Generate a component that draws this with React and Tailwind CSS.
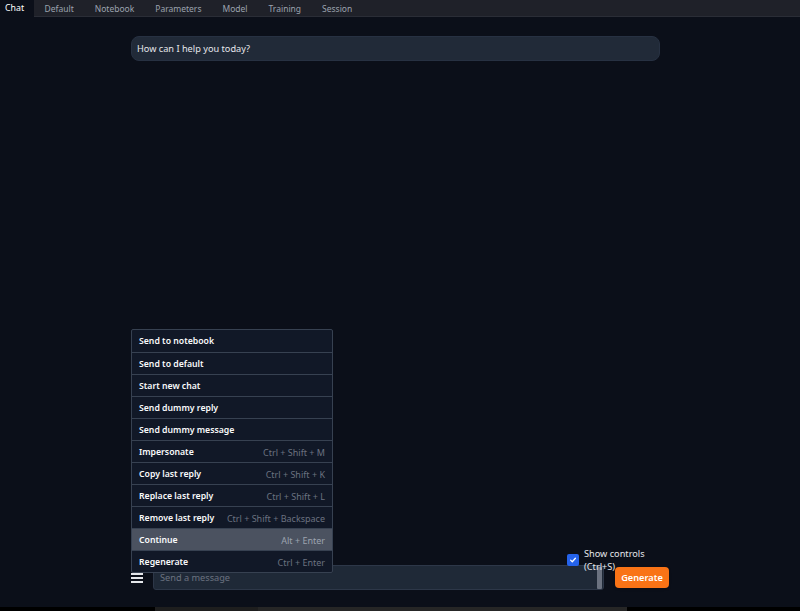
import React, { useState } from 'react';

const tabs = ['Chat', 'Default', 'Notebook', 'Parameters', 'Model', 'Training', 'Session'];

const menuItems = [
  { label: 'Send to notebook', keys: '' },
  { label: 'Send to default', keys: '' },
  { label: 'Start new chat', keys: '' },
  { label: 'Send dummy reply', keys: '' },
  { label: 'Send dummy message', keys: '' },
  { label: 'Impersonate', keys: 'Ctrl + Shift + M' },
  { label: 'Copy last reply', keys: 'Ctrl + Shift + K' },
  { label: 'Replace last reply', keys: 'Ctrl + Shift + L' },
  { label: 'Remove last reply', keys: 'Ctrl + Shift + Backspace' },
  { label: 'Continue', keys: 'Alt + Enter' },
  { label: 'Regenerate', keys: 'Ctrl + Enter' },
];

function App() {
  const [active, setActive] = useState('Chat');
  const [hover] = useState('Continue');
  const [showControls, setShowControls] = useState(true);
  const [msg, setMsg] = useState('');

  return (
    <div className="h-[611px] w-[800px] flex flex-col bg-[#0b0f19] overflow-hidden" style={{ fontFamily: '"Noto Sans", "Open Sans", sans-serif' }}>
      {/* tabs */}
      <div className="h-[17px] flex bg-[#1f2129] border-b border-[#2a2d36] text-[8.5px] leading-[17px]">
        {tabs.map((t) => (
          <button
            key={t}
            onClick={() => setActive(t)}
            className={
              active === t
                ? 'w-[34px] pl-[5px] text-left h-[17px] bg-[#0b0f19] text-white text-[8.8px]'
                : 'px-[10.5px] h-[17px] text-[#9ca3af]'
            }
          >
            {t}
          </button>
        ))}
      </div>

      {/* chat */}
      <div className="flex-1 flex flex-col pl-[131px] pr-[131px]">
        <div className="mt-[19px] w-[529px] h-[25px] rounded-[8px] bg-[#212a38] border border-[#273142] px-[5px] flex items-center text-[9.2px] text-[#e5e7eb]">
          How can I help you today?
        </div>

        <div className="flex-1" />

        <div className="relative flex items-center h-[25px] mb-[17px]">
          {/* menu */}
          <div className="absolute z-10 left-0 bottom-[17px] w-[202px] bg-[#111827] border border-[#374151] rounded-[2px] text-[9px]">
            {menuItems.map((m, i) => (
              <div
                key={m.label}
                className={
                  'h-[22px] px-[7px] pt-[2px] flex items-center justify-between ' +
                  (i > 0 ? 'border-t border-[#374151] ' : '') +
                  (hover === m.label ? 'bg-[#4b5260]' : '')
                }
              >
                <span className="font-semibold text-[8.7px] text-[#f9fafb]">{m.label}</span>
                <span className={hover === m.label ? 'text-[#9ca3af]' : 'text-[#6b7280]'}>{m.keys}</span>
              </div>
            ))}
          </div>

          {/* hamburger */}
          <div className="w-[12px] h-[10px] flex flex-col justify-between mr-[10px]">
            <div className="h-[2px] bg-[#e5e7eb]" />
            <div className="h-[2px] bg-[#e5e7eb]" />
            <div className="h-[2px] bg-[#e5e7eb]" />
          </div>

          <div className="w-[451px] h-[25px] bg-[#1f2937] border border-[#2d3748] rounded-[3px] flex items-center relative">
            <input
              value={msg}
              onChange={(e) => setMsg(e.target.value)}
              placeholder="Send a message"
              className="flex-1 bg-transparent outline-none px-[6px] text-[9.2px] text-[#e5e7eb] placeholder-[#6b7280]"
            />
            <div className="w-[5px] h-[22px] mr-[1px] bg-[#6b7280] rounded-[1px]" />
          </div>

          {/* show controls */}
          <label className="absolute left-[436px] top-[-18px] flex items-center gap-[5px] text-[9.2px] leading-[13px] text-[#e5e7eb]">
            <span
              onClick={() => setShowControls(!showControls)}
              className={'w-[12px] h-[12px] rounded-[2px] flex items-center justify-center ' + (showControls ? 'bg-[#2563eb]' : 'bg-[#1f2937] border border-[#4b5563]')}
            >
              {showControls && (
                <svg width="8" height="8" viewBox="0 0 10 10">
                  <path d="M2 5.2 L4.1 7.2 L8 2.8" stroke="white" strokeWidth="1.6" fill="none" strokeLinecap="round" strokeLinejoin="round" />
                </svg>
              )}
            </span>
            <span>
              Show controls
              <br />
              (Ctrl+S)
            </span>
          </label>

          <button className="ml-[11px] w-[54px] h-[21px] rounded-[4px] bg-[#f97316] text-white text-[9.2px] font-semibold shadow">
            Generate
          </button>
        </div>
      </div>

      {/* bottom strip */}
      <div className="h-[4px] flex bg-black">
        <div className="ml-[155px] w-[103px] bg-[#1e1e1e]" />
        <div className="w-[369px] bg-[#262626]" />
      </div>
    </div>
  );
}

export default App;
